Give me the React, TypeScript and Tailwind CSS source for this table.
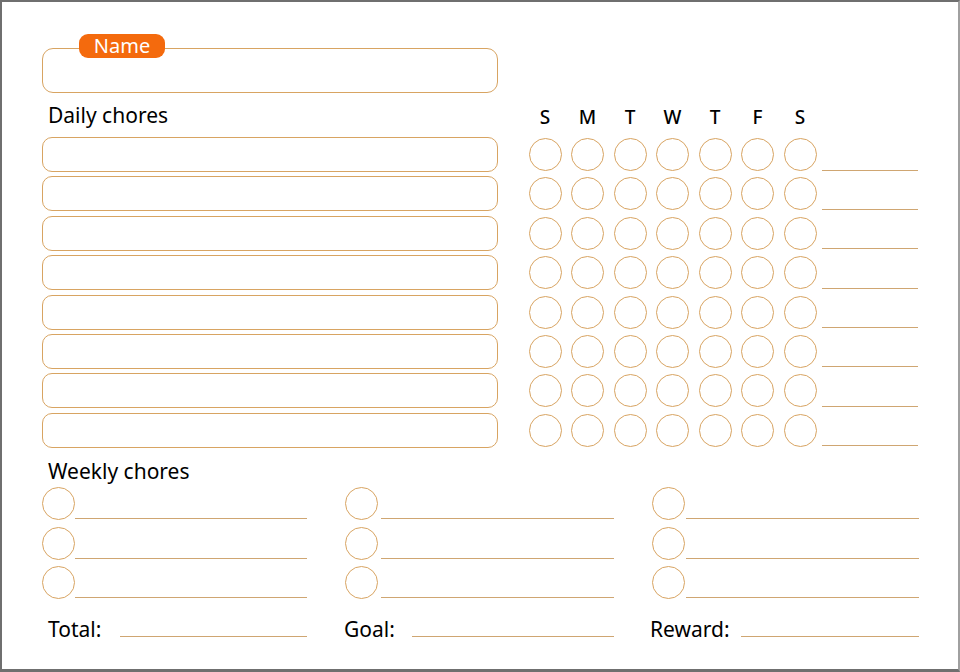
import React from "react";

const days = ["S", "M", "T", "W", "T", "F", "S"];
const rows = Array.from({ length: 8 });

function Circle() {
  return <div className="w-[33px] h-[33px] shrink-0 rounded-full border-[1.5px] border-[#d8a462]" />;
}

function WeeklyCol({ width, lineGap }: { width: string; lineGap: string }) {
  return (
    <div className={`flex flex-col gap-[6.5px] ${width}`}>
      {[0, 1, 2].map((i) => (
        <div key={i} className="flex h-[33px] items-end">
          <Circle />
          <div className={`flex-1 h-px bg-[#cfa672] mb-[1px] ${lineGap}`} />
        </div>
      ))}
    </div>
  );
}

export default function App() {
  return (
    <div
      className="w-[960px] h-[672px] bg-white border-t-2 border-l-2 border-r-2 border-b-[3px] border-[#6f6f6f] border-r-[#a0a0a0] pl-[40px] pt-[46px] text-black"
      style={{ fontFamily: '"Noto Sans", "Open Sans", sans-serif' }}
    >
      <div className="flex">
        {/* left column */}
        <div className="w-[456px] flex flex-col">
          <div className="relative h-[45px] rounded-[11px] border-[1.5px] border-[#d8a462]">
            <div className="absolute left-[36px] top-[-15px] w-[86px] h-[24px] rounded-[9px] bg-[#f46a0d] flex items-center justify-center text-white text-[20px] leading-none">
              Name
            </div>
          </div>
          <div className="h-[44px] flex items-center pl-[6px] text-[21px] leading-none">Daily chores</div>
          <div className="flex flex-col gap-[4.4px]">
            {rows.map((_, i) => (
              <div key={i} className="h-[35px] rounded-[10px] border-[1.5px] border-[#d8a462]" />
            ))}
          </div>
        </div>
        {/* right column */}
        <div className="ml-[30.5px] flex flex-col">
          <div className="h-[45px]" />
          <div className="h-[44px] flex items-center gap-[9.5px] pt-[5px]">
            {days.map((d, i) => (
              <div key={i} className="w-[33px] text-center text-[19px] font-medium leading-none">
                {d}
              </div>
            ))}
          </div>
          <div className="flex flex-col gap-[4.4px]">
            {rows.map((_, i) => (
              <div key={i} className="h-[35px] flex items-center">
                <div className="flex gap-[9.5px]">
                  {days.map((_, j) => (
                    <Circle key={j} />
                  ))}
                </div>
                <div className="self-end mb-[1.5px] ml-[5.5px] w-[96px] h-px bg-[#cfa672]" />
              </div>
            ))}
          </div>
        </div>
      </div>

      <div className="h-[39.5px] flex items-center pt-[8px] pl-[6px] text-[21px] leading-none">Weekly chores</div>
      <div className="flex gap-[38px]">
        <WeeklyCol width="w-[265px]" lineGap="ml-0" />
        <WeeklyCol width="w-[269px]" lineGap="ml-[3px]" />
        <WeeklyCol width="w-[267px]" lineGap="ml-[1px]" />
      </div>

      <div className="flex gap-[38px] mt-[18px] h-[24px] text-[21px] leading-none">
        <div className="w-[265px] flex items-center pl-[6px]">
          <span>Total:</span>
          <div className="self-end mb-[4px] ml-[19px] flex-1 h-px bg-[#cfa672]" />
        </div>
        <div className="w-[269px] flex items-center">
          <span className="-ml-[1px]">Goal:</span>
          <div className="self-end mb-[4px] ml-[17px] flex-1 h-px bg-[#cfa672]" />
        </div>
        <div className="w-[267px] flex items-center">
          <span className="-ml-[2px]">Reward:</span>
          <div className="self-end mb-[4px] ml-[11px] flex-1 h-px bg-[#cfa672]" />
        </div>
      </div>
    </div>
  );
}
